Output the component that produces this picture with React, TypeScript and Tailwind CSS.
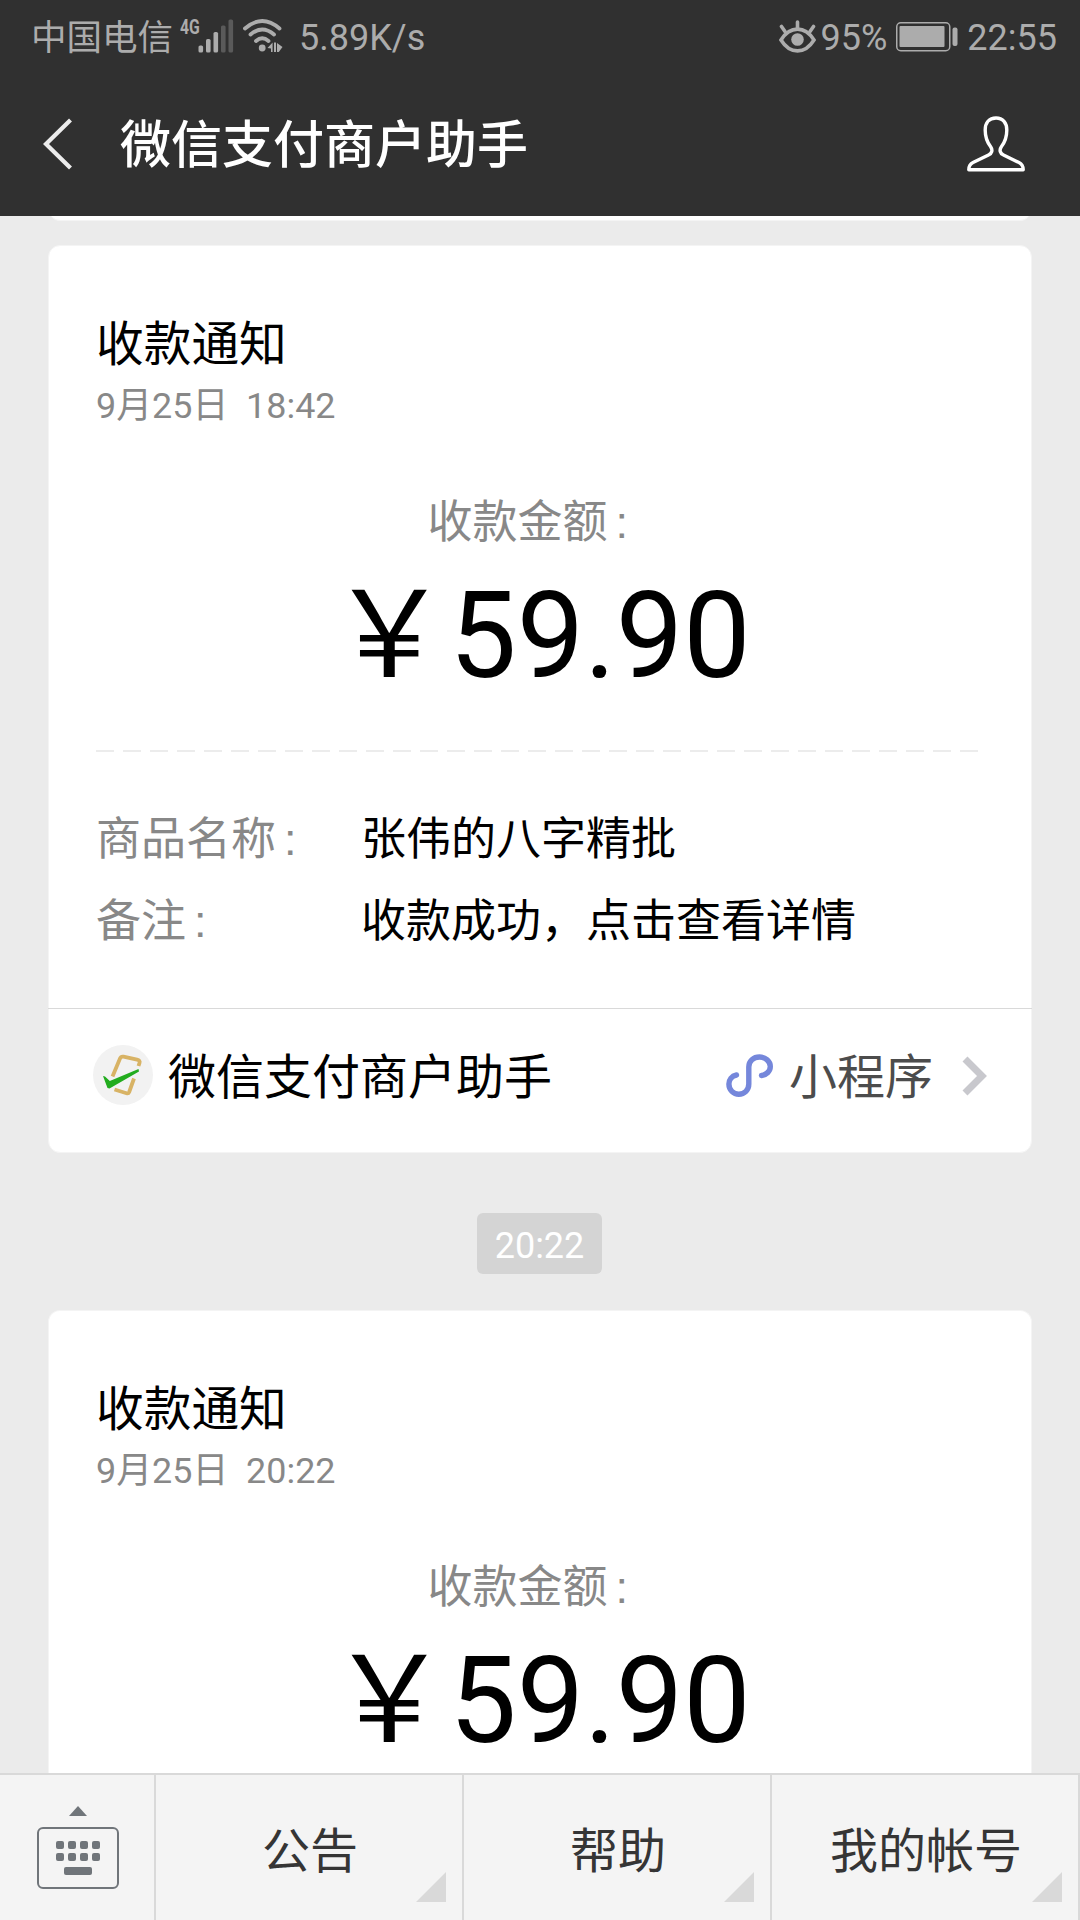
import type { ReactNode } from "react";

interface NoticeCardProps {
  time: string;
  amount: string;
  details?: { product: string; remark: string };
}

const menus = ["公告", "帮助", "我的帐号"];

const SignalIcon = () => (
  <svg width="36" height="34" viewBox="0 0 36 34" className="shrink-0">
    <g fill="#acacac">
      <rect x="0.5" y="26.5" width="4.6" height="7" rx="1.6" />
      <rect x="8" y="20" width="4.6" height="13.5" rx="1.6" />
      <rect x="15.5" y="13" width="4.6" height="20.5" rx="1.6" />
    </g>
    <g fill="#5a5a5a">
      <rect x="23" y="6.5" width="4.6" height="27" rx="1.6" />
      <rect x="30.5" y="0.5" width="4.6" height="33" rx="1.6" />
    </g>
  </svg>
);

const WifiIcon = () => (
  <svg width="40" height="34" viewBox="0 0 40 34" className="shrink-0">
    <g fill="none" stroke="#acacac" strokeWidth="3.8" strokeLinecap="round">
      <path d="M2 9.5 Q19.2 -5.5 36.5 9.5" />
      <path d="M7.5 15.5 Q19.2 5.5 31 15.5" />
      <path d="M13 22 Q19.2 16.5 25.5 22" />
    </g>
    <circle cx="19.2" cy="29" r="3.4" fill="#acacac" />
    <path d="M24.5 29 L29.6 23.5 V33 H28 V29.5 Z M31 23.5 H33 V33 H31 Z M34 24 L39.5 28 L35.8 33 H34 Z" fill="#acacac" />
  </svg>
);

const EyeIcon = () => (
  <svg width="37" height="33" viewBox="0 0 37 33" className="shrink-0">
    <g fill="none" stroke="#acacac" strokeWidth="3.6" strokeLinecap="round">
      <path d="M2 20 C11 5.5 26 5.5 35 20 C26 34.5 11 34.5 2 20 Z" />
      <path d="M18.5 2 V9 M2.5 6.5 L6 11.5 M34.5 6.5 L31 11.5" />
    </g>
    <circle cx="18.5" cy="19.5" r="6.3" fill="#acacac" />
  </svg>
);

const BatteryIcon = () => (
  <svg width="62" height="30" viewBox="0 0 62 30" className="mt-px shrink-0">
    <rect x="0.75" y="0.75" width="53" height="28" rx="4" fill="none" stroke="#acacac" strokeWidth="1.5" />
    <rect x="3.5" y="4" width="45" height="21" rx="1" fill="#acacac" />
    <rect x="56.5" y="5.5" width="5" height="18.5" rx="2" fill="#acacac" />
  </svg>
);

const PersonIcon = () => (
  <svg width="58" height="56" viewBox="0 0 58 56" fill="none" stroke="#fff" strokeWidth="3.4" strokeLinejoin="round">
    <path d="M29 2 C22 2 18.2 7 18.2 14 C18.2 22 20 26 23.5 30.5 C26 34 25 37.5 21.5 39 L6 46.5 C2.5 48.2 1.8 50 1.8 53.8 H56.2 C56.2 50 55.5 48.2 52 46.5 L36.5 39 C33 37.5 32 34 34.5 30.5 C38 26 39.8 22 39.8 14 C39.8 7 36 2 29 2 Z" />
  </svg>
);

const AssistantLogo = () => (
  <svg width="60" height="60" viewBox="0 0 60 60" className="-mt-px shrink-0">
    <circle cx="30" cy="30" r="30" fill="#f2f2f2" />
    <g fill="none" stroke="#d8b365" strokeWidth="3.8">
      <path d="M19.5 31.5 L27 13.5 Q28 11.2 30.5 11.7 L44 14.7 Q47.5 15.5 46.5 18 L45.5 21" />
      <path d="M21.5 44.5 L33.5 48.2 Q35.5 48.7 36.2 47 L41 33.5" />
    </g>
    <path d="M10 31 L12 31.5 L16.8 36 L45.5 24 L46 26.5 L16.5 43.5 L14.5 43 Z" fill="#22ac1e" />
  </svg>
);

const MiniProgramIcon = () => (
  <svg width="48" height="44" viewBox="0 0 48 44" fill="none" stroke="#7587db" strokeWidth="5.4" strokeLinecap="round">
    <path d="M10.5 21 C5.5 22 2.9 26 2.9 30 C2.9 36 7.5 40.2 12.8 40.2 C18.5 40.2 22.8 36 22.8 30 V13 C22.8 7 27.5 3 33.5 3 C39.5 3 44.3 7.5 44.3 12.5 C44.3 17 40.5 21 35.5 21.5" />
  </svg>
);

const KeyboardIcon = () => (
  <svg width="84" height="84" viewBox="0 0 84 84">
    <path d="M42 0 L51 10 H33 Z" fill="#70757a" />
    <rect x="2" y="22" width="80" height="60" rx="5" fill="none" stroke="#70757a" strokeWidth="2" />
    <g fill="#70757a">
      {[35, 47].map((y) => [20, 32, 44, 56].map((x) => <rect key={`${x}-${y}`} x={x} y={y} width="8" height="8" rx="2" />))}
      <rect x="28" y="61" width="28" height="8" rx="2" />
    </g>
  </svg>
);

// full-width cell with a square-dotted colon
const Colon = () => <span className="inline-block w-[45px] pl-[8px] text-left font-['Liberation_Sans',sans-serif]">:</span>;

const Row = ({ label, children }: { label: string; children: ReactNode }) => (
  <div className="flex h-[82px] items-center text-[45px]">
    <div className="w-[265px] shrink-0 text-[#888888]">
      {label}
      <Colon />
    </div>
    <div className="whitespace-nowrap text-black">{children}</div>
  </div>
);

const NoticeCard = ({ time, amount, details }: NoticeCardProps) => (
  <section className={details ? "h-[908px] shrink-0 rounded-[12px] border border-[#f4f4f4] bg-white" : "min-h-0 flex-1 rounded-t-[12px] border border-b-0 border-[#f4f4f4] bg-white"}>
    <div className={details ? "h-[762px] px-[47px]" : "px-[47px]"}>
      <h2 className="pt-[66px] text-[47.7px] leading-[66px] text-black">收款通知</h2>
      <p className="-mt-[2px] text-[35.9px] leading-[60px] whitespace-pre text-[#888888]">{`9月25日  ${time}`}</p>

      <p className="mt-[54px] text-center text-[45px] leading-[66px] text-[#888888]">
        收款金额
        <Colon />
      </p>
      <p className="mt-[10px] text-center text-[120px] leading-[140px] whitespace-nowrap text-black">￥{amount}</p>

      {details && (
        <>
          <div className="mt-[44px] h-[2px] w-[882px] bg-[repeating-linear-gradient(90deg,#ececec_0_18px,transparent_18px_27px)]" />
          <div className="mt-[47px]">
            <Row label="商品名称">{details.product}</Row>
            <Row label="备注">{details.remark}</Row>
          </div>
        </>
      )}
    </div>

    {details && (
      <footer className="-mx-px flex h-[134px] items-center border-t border-[#d9d9d9] pr-[44px] pl-[45px]">
        <AssistantLogo />
        <span className="ml-[15px] pt-[5px] text-[48px] text-black">微信支付商户助手</span>
        <div className="ml-auto flex items-center">
          <MiniProgramIcon />
          <span className="ml-[15px] pt-[5px] text-[48px] text-[#4c4c4c]">小程序</span>
          <svg width="26" height="40" viewBox="0 0 26 40" fill="none" stroke="#c8c8cd" strokeWidth="7" className="ml-[29px]">
            <path d="M3 3 L20 20 L3 37" />
          </svg>
        </div>
      </footer>
    )}
  </section>
);

export default function App() {
  return (
    <div className="flex h-[1920px] w-[1080px] flex-col overflow-hidden bg-[#ebebeb] font-[Roboto,'Noto_Sans_CJK_SC',sans-serif]">
      <div className="flex h-[72px] shrink-0 items-center bg-[#303030] pr-[23px] pl-[31px] text-[36px] leading-[72px] text-[#acacac]">
        <span className="pt-[4px] text-[35.5px]">中国电信</span>
        <span className="ml-[7px] w-[18px] origin-left scale-x-75 self-start pt-[15px] text-[21px] leading-6 font-bold">4G</span>
        <SignalIcon />
        <span className="w-[9px]" />
        <WifiIcon />
        <span className="ml-[16px] pt-[4px]">5.89K/s</span>
        <span className="ml-auto" />
        <EyeIcon />
        <span className="ml-[5px] pt-[4px]">95%</span>
        <span className="w-[9px]" />
        <BatteryIcon />
        <span className="ml-[9px] pt-[4px]">22:55</span>
      </div>

      <header className="flex h-[144px] shrink-0 items-center bg-[#303030] pr-[55px] pl-[43px] text-white">
        <svg width="30" height="52" viewBox="0 0 30 52" fill="none" stroke="#ececec" strokeWidth="4.2">
          <path d="M27.5 2 L3 26 L27.5 50" />
        </svg>
        <h1 className="ml-[47px] pt-[5px] text-[51px] font-medium">微信支付商户助手</h1>
        <div className="ml-auto">
          <PersonIcon />
        </div>
      </header>

      <main className="flex min-h-0 flex-1 flex-col overflow-hidden px-12">
        {/* tail of the previous message */}
        <div className="h-[5px] shrink-0 overflow-hidden">
          <div className="-mt-[20px] h-[25px] rounded-[12px] border border-[#f4f4f4] bg-white" />
        </div>
        <div className="h-[24px] shrink-0" />
        <NoticeCard time="18:42" amount="59.90" details={{ product: "张伟的八字精批", remark: "收款成功，点击查看详情" }} />
        <time className="mt-[60px] mr-px mb-[36px] flex h-[61px] w-[125px] shrink-0 items-center justify-center self-center rounded-[6px] bg-[#d4d4d4] pt-[5px] text-[36px] text-white">
          20:22
        </time>
        <NoticeCard time="20:22" amount="59.90" />
      </main>

      <nav className="flex h-[147px] shrink-0 border-t-2 border-[#d9d9d9] bg-[#f4f4f4] text-[48px] text-[#353535]">
        <button className="flex w-[156px] items-start justify-center border-r-2 border-[#d9d9d9] pt-[31px] pl-[2px]">
          <KeyboardIcon />
        </button>
        {menus.map((name) => (
          <button key={name} className="relative flex w-[308px] items-center justify-center border-r-2 border-[#d9d9d9] pt-[8px] pl-[2px]">
            {name}
            <svg width="30" height="30" viewBox="0 0 30 30" className="absolute right-4 bottom-[18px]">
              <path d="M30 0 V30 H0 Z" fill="#d9d9d9" />
            </svg>
          </button>
        ))}
      </nav>
    </div>
  );
}
